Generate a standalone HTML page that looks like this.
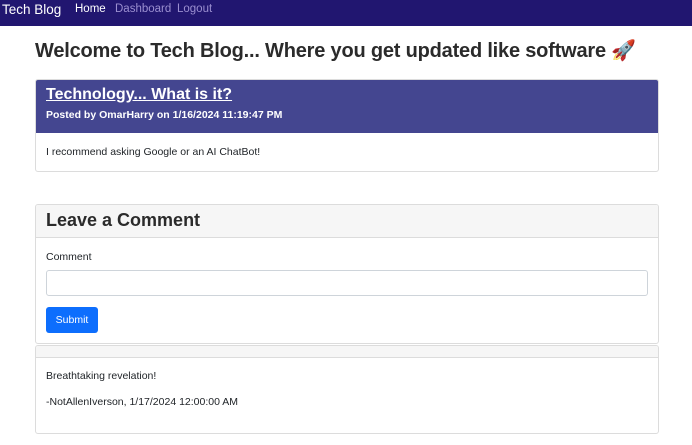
<!DOCTYPE html>
<html><head><style>
*{box-sizing:border-box;margin:0;padding:0}
body{width:692px;height:445px;overflow:hidden;background:#fff;font-family:"Liberation Sans",sans-serif;color:#212529;position:relative}
.nav{position:absolute;left:0;top:0;width:692px;height:26px;background:#211670;color:#fff}
.nav span{position:absolute;top:3px;font-size:12px}
.ab{position:absolute}
.card{position:absolute;left:35px;width:624px;border:1px solid #dcdcdc;border-radius:3px;overflow:hidden}
</style></head><body>
<div class="nav">
<span style="left:2px;font-size:13.5px;top:2px">Tech Blog</span>
<span style="left:75px;color:#fff;font-size:11.5px;top:3px">Home</span>
<span style="left:115px;color:#9b8fd0;font-size:11.5px;top:3px">Dashboard</span>
<span style="left:177px;color:#9b8fd0;font-size:11.5px;top:3px">Logout</span>
</div>
<div class="ab" style="left:35px;top:38px;font-size:20px;font-weight:bold;color:#2b2b2b;letter-spacing:-0.2px">Welcome to Tech Blog... Where you get updated like software <span style="color:#d9465a">🚀</span></div>
<div class="card" style="top:79px;height:93px">
<div style="height:53px;background:#444690;color:#fff;padding:6px 10px">
<div style="font-size:16px;font-weight:bold;text-decoration:underline">Technology... What is it?</div>
<div style="font-size:10.5px;font-weight:bold;margin-top:5px">Posted by OmarHarry on 1/16/2024 11:19:47 PM</div>
</div>
<div style="font-size:10.5px;padding:13px 10px">I recommend asking Google or an AI ChatBot!</div>
</div>
<div class="card" style="top:204px;height:140px">
<div style="height:33px;background:#f6f6f6;border-bottom:1px solid #dcdcdc;padding:5px 10px;font-size:18px;font-weight:bold;color:#2b2b2b">Leave a Comment</div>
<div class="ab" style="left:10px;top:46px;font-size:10.5px">Comment</div>
<div class="ab" style="left:10px;top:65px;width:602px;height:26px;border:1px solid #ced4da;border-radius:3px"></div>
<div class="ab" style="left:10px;top:102px;width:52px;height:26px;background:#0d6efd;border-radius:3px;color:#fff;font-size:10.5px;text-align:center;line-height:26px">Submit</div>
</div>
<div class="card" style="top:345px;height:89px">
<div style="height:12px;background:#f6f6f6;border-bottom:1px solid #dcdcdc"></div>
<div class="ab" style="left:10px;top:24px;font-size:10.5px">Breathtaking revelation!</div>
<div class="ab" style="left:10px;top:50px;font-size:10.5px">-NotAllenIverson, 1/17/2024 12:00:00 AM</div>
</div>
</body></html>
